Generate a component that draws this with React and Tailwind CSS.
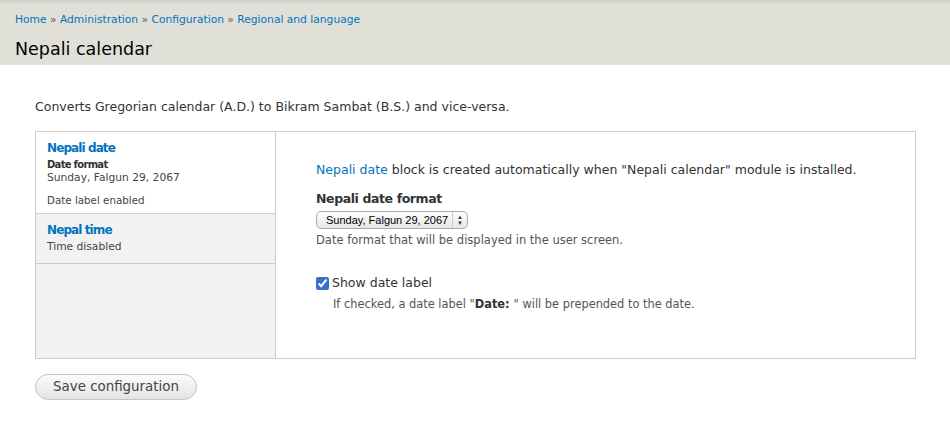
import React, { useState } from "react";

const FONT = { fontFamily: '"DejaVu Sans", "Lucida Grande", Verdana, sans-serif' };

function Breadcrumb() {
  const items = ["Home", "Administration", "Configuration", "Regional and language"];
  return (
    <div className="text-[10.7px] leading-[16px] text-[#0074bd]">
      {items.map((it, i) => (
        <span key={it}>
          {i > 0 && <span className="text-[#555]"> » </span>}
          <a href="#" className="text-[#0074bd]">{it}</a>
        </span>
      ))}
    </div>
  );
}

export default function App() {
  const [showLabel, setShowLabel] = useState(true);
  const [tab, setTab] = useState(0);

  return (
    <div className="min-h-[430px] w-[950px] bg-white text-[#333]" style={FONT}>
      <div className="h-[65px] bg-[#e0e0d8] bg-gradient-to-b from-[#cfcfc8] via-[#e0e0d8] to-[#e0e0d8] bg-[length:100%_10px] bg-no-repeat px-[15px] pt-[12px]">
        <Breadcrumb />
        <h1 className="mt-[9px] text-[17.5px] leading-[24px] font-normal text-black">Nepali calendar</h1>
      </div>

      <div className="px-[35px] pt-[33px]">
        <p className="text-[12.5px] leading-[18px] text-[#333]">
          Converts Gregorian calendar (A.D.) to Bikram Sambat (B.S.) and vice-versa.
        </p>

        <div className="mt-[15px] flex h-[228px] w-[881px] border border-[#ccc]">
          <ul className="w-[240px] shrink-0 border-r border-[#ccc] bg-[#f2f2f2]">
            <li
              onClick={() => setTab(0)}
              className={`h-[82px] cursor-pointer border-b border-[#ccc] px-[11px] pt-[8px] ${tab === 0 ? "bg-white" : "bg-[#f2f2f2]"}`}
            >
              <div className="text-[12px] leading-[17px] font-bold tracking-[-0.9px] text-[#0074bd]">Nepali date</div>
              <div className="mt-[2px] text-[10px] leading-[12px] font-bold tracking-[-0.7px] text-[#333]">Date format</div>
              <div className="text-[10.7px] leading-[13px] text-[#444]">Sunday, Falgun 29, 2067</div>
              <div className="mt-[9px] text-[10.3px] leading-[14px] text-[#444]">Date label enabled</div>
            </li>
            <li
              onClick={() => setTab(1)}
              className={`h-[50px] cursor-pointer border-b border-[#ccc] px-[11px] pt-[8px] ${tab === 1 ? "bg-white" : "bg-[#f2f2f2]"}`}
            >
              <div className="text-[12px] leading-[17px] font-bold tracking-[-0.9px] text-[#0074bd]">Nepal time</div>
              <div className="text-[10.7px] leading-[16px] text-[#444]">Time disabled</div>
            </li>
          </ul>

          <div className="flex-1 pl-[40px] pt-[29px]">
            <p className="text-[12.5px] leading-[18px] text-[#333]">
              <a href="#" className="text-[#0074bd]">Nepali date</a> block is created automatically when "Nepali calendar" module is installed.
            </p>

            <div className="mt-[11px] text-[12.5px] leading-[18px] font-bold tracking-[-0.4px] text-[#333]">Nepali date format</div>
            <div className="mt-[3px] flex h-[18px] w-[152px] items-center rounded-[5px] border border-[#aaa] bg-gradient-to-b from-white to-[#e6e6e6] text-[11px]" style={{ fontFamily: '"Liberation Sans", Arial, sans-serif' }}>
              <span className="flex-1 pl-[9px] text-black">Sunday, Falgun 29, 2067</span>
              <span className="flex h-full w-[15px] flex-col items-center justify-center border-l border-[#ccc] text-[6px] leading-[6px] text-[#333]">
                <span>▲</span>
                <span>▼</span>
              </span>
            </div>
            <div className="mt-[3px] text-[11.5px] leading-[16px] text-[#555]">Date format that will be displayed in the user screen.</div>

            <label className="mt-[26px] flex items-center text-[12.5px] leading-[18px] text-[#333]">
              <input
                type="checkbox"
                checked={showLabel}
                onChange={(e) => setShowLabel(e.target.checked)}
                className="mr-[3px] h-[13px] w-[13px] accent-[#3a6fd0]"
              />
              Show date label
            </label>
            <div className="mt-[4px] pl-[17px] text-[11.4px] leading-[16px] text-[#555]">
              If checked, a date label "<b className="text-[#333]">Date: </b>" will be prepended to the date.
            </div>
          </div>
        </div>

        <button
          type="button"
          className="mt-[15px] h-[26px] w-[162px] rounded-full border border-[#c5c5c5] bg-gradient-to-b from-[#fcfcfc] to-[#e3e3e3] text-[13.4px] text-[#444]"
        >
          Save configuration
        </button>
      </div>
    </div>
  );
}
